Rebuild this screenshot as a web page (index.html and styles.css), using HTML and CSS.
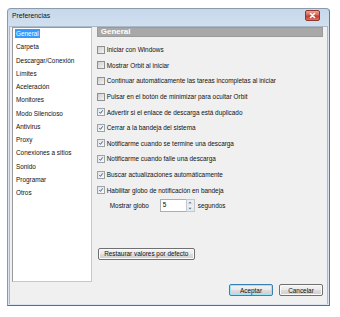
FILE: index.html
```html
<!DOCTYPE html>
<html lang="es">
<head>
  <meta charset="UTF-8">
  <title>Preferencias</title>
  <link rel="stylesheet" href="styles.css">
</head>
<body>
  <div class="window">
    <div class="titlebar">
      <span class="title">Preferencias</span>
      <span class="close-btn">
        <svg viewBox="0 0 13 9" width="13" height="9"><path d="M4.5 2.5 L8.5 6.5 M8.5 2.5 L4.5 6.5" stroke="#fff" stroke-width="1.6" stroke-linecap="round"/></svg>
      </span>
    </div>
    <div class="client">
      <div class="main">
        <ul class="listbox">
          <li><span class="sel">General</span></li>
          <li>Carpeta</li>
          <li>Descargar/Conexión</li>
          <li>Límites</li>
          <li>Aceleración</li>
          <li>Monitores</li>
          <li>Modo Silencioso</li>
          <li>Antivirus</li>
          <li>Proxy</li>
          <li>Conexiones a sitios</li>
          <li>Sonido</li>
          <li>Programar</li>
          <li>Otros</li>
        </ul>
        <div class="panel">
          <div class="panel-header">General</div>
          <div class="options">
            <label class="opt"><span class="cb"></span>Iniciar con Windows</label>
            <label class="opt"><span class="cb"></span>Mostrar Orbit al iniciar</label>
            <label class="opt"><span class="cb"></span>Continuar automáticamente las tareas incompletas al iniciar</label>
            <label class="opt"><span class="cb"></span>Pulsar en el botón de minimizar para ocultar Orbit</label>
            <label class="opt"><span class="cb on"><svg viewBox="0 0 8 8"><path d="M1.8 4.2 L3.3 5.8 L6.3 1.8" fill="none" stroke="#2b5aa0" stroke-width="1.3"/></svg></span>Advertir si el enlace de descarga está duplicado</label>
            <label class="opt"><span class="cb on"><svg viewBox="0 0 8 8"><path d="M1.8 4.2 L3.3 5.8 L6.3 1.8" fill="none" stroke="#2b5aa0" stroke-width="1.3"/></svg></span>Cerrar a la bandeja del sistema</label>
            <label class="opt"><span class="cb on"><svg viewBox="0 0 8 8"><path d="M1.8 4.2 L3.3 5.8 L6.3 1.8" fill="none" stroke="#2b5aa0" stroke-width="1.3"/></svg></span>Notificarme cuando se termine una descarga</label>
            <label class="opt"><span class="cb on"><svg viewBox="0 0 8 8"><path d="M1.8 4.2 L3.3 5.8 L6.3 1.8" fill="none" stroke="#2b5aa0" stroke-width="1.3"/></svg></span>Notificarme cuando falle una descarga</label>
            <label class="opt"><span class="cb on"><svg viewBox="0 0 8 8"><path d="M1.8 4.2 L3.3 5.8 L6.3 1.8" fill="none" stroke="#2b5aa0" stroke-width="1.3"/></svg></span>Buscar actualizaciones automáticamente</label>
            <label class="opt"><span class="cb on"><svg viewBox="0 0 8 8"><path d="M1.8 4.2 L3.3 5.8 L6.3 1.8" fill="none" stroke="#2b5aa0" stroke-width="1.3"/></svg></span>Habilitar globo de notificación en bandeja</label>
          </div>
          <div class="balloon-row">
            <span class="balloon-label">Mostrar globo</span>
            <span class="spin-input">5</span>
            <span class="spinner">
              <span class="spin-up"><svg viewBox="0 0 5 3"><path d="M0.5 2.5 L2.5 0.5 L4.5 2.5 Z" fill="#4a6a8a"/></svg></span>
              <span class="spin-down"><svg viewBox="0 0 5 3"><path d="M0.5 0.5 L2.5 2.5 L4.5 0.5 Z" fill="#4a6a8a"/></svg></span>
            </span>
            <span class="unit">segundos</span>
          </div>
          <button class="btn restore">Restaurar valores por defecto</button>
        </div>
      </div>
      <div class="footer">
        <button class="btn default">Aceptar</button>
        <button class="btn">Cancelar</button>
      </div>
    </div>
  </div>
</body>
</html>
```

FILE: styles.css
```css
body {
  margin: 0;
  background: #fff;
  font-family: 'Liberation Sans', Arial, sans-serif;
  font-size: 6.4px;
  color: #000;
}
.window {
  margin: 8px 0 0 7px;
  width: 323px;
  height: 298px;
  box-sizing: border-box;
  border: 1px solid;
  border-color: #8d9aa8 #3a87b5 #2f7eaa #8d99a6;
  border-radius: 4px 4px 0 0;
  background: linear-gradient(#c6d8ec, #d9e5f2 10%, #dbe6f2);
  padding: 0 1px 1px 1px;
  display: flex;
  flex-direction: column;
}
.titlebar {
  height: 17px;
  padding: 1px 8px 0 3px;
  box-sizing: border-box;
  display: flex;
  align-items: flex-start;
  justify-content: space-between;
}
.title {
  font-size: 6.8px;
  line-height: 11px;
  color: #111;
}
.close-btn {
  width: 13px;
  height: 9px;
  border: 1px solid #8b3a30;
  border-radius: 2px;
  background: linear-gradient(#e9a295, #d6685a 45%, #c4392a 55%, #d8735f);
  display: flex;
}
.close-btn svg {
  display: block;
}
.client {
  flex: 1;
  background: #f0f0f0;
  border: 1px solid #aab8c8;
  border-bottom: 0;
  padding: 0 4px 0 2px;
  display: flex;
  flex-direction: column;
}
.main {
  display: flex;
  gap: 5px;
}
.listbox {
  list-style: none;
  margin: 0;
  padding: 0 0 0 3px;
  width: 80px;
  height: 255px;
  box-sizing: border-box;
  background: #fff;
  border: 1px solid #a6a6a6;
  border-color: #9a9a9a #c8c8c8 #c8c8c8 #9a9a9a;
}
.listbox li {
  height: 13.28px;
  line-height: 13.28px;
  color: #111;
  white-space: nowrap;
}
.listbox li:first-child {
  margin-top: -1px;
}
.listbox .sel {
  background: #3399ff;
  color: #fff;
  display: inline-block;
  line-height: 9px;
  padding: 0 1px 0 0;
  margin-left: -1px;
  padding-left: 1px;
}
.panel {
  width: 227px;
  display: flex;
  flex-direction: column;
  align-items: flex-start;
}
.panel-header {
  align-self: stretch;
  height: 10px;
  box-sizing: border-box;
  background: #a8a8a8;
  border: 1px solid #9a9a9a;
  color: #fff;
  font-weight: bold;
  font-size: 8px;
  line-height: 8px;
  padding-left: 3px;
}
.options {
  margin-top: 5px;
  display: flex;
  flex-direction: column;
}
.opt {
  height: 15.6px;
  display: flex;
  align-items: center;
  white-space: nowrap;
  color: #111;
}
.cb {
  width: 8px;
  height: 8px;
  box-sizing: border-box;
  border: 1px solid #8e8f8f;
  background: linear-gradient(135deg, #cfcfcf, #f4f4f4);
  margin-right: 2px;
  display: flex;
}
.cb.on {
  background: linear-gradient(135deg, #e4e4e4, #fafafa);
  border-color: #9ea3a8;
}
.cb svg {
  width: 6px;
  height: 6px;
}
.balloon-row {
  margin-top: 1px;
  height: 13px;
  display: flex;
  align-items: stretch;
  padding-left: 13px;
}
.balloon-label {
  width: 50px;
  display: flex;
  align-items: center;
  color: #111;
}
.spin-input {
  width: 26px;
  box-sizing: border-box;
  background: #fff;
  border: 1px solid #abadb3;
  border-right: 0;
  padding: 1px 0 0 2px;
  line-height: 7px;
}
.spinner {
  width: 9px;
  display: flex;
  flex-direction: column;
  border: 1px solid #c4c8cc;
  box-sizing: border-box;
  background: #fff;
}
.spin-up,
.spin-down {
  flex: 1;
  background: linear-gradient(#f4f6f8, #dde3ea);
  border: 1px solid #e8ecf0;
  display: flex;
  align-items: center;
  justify-content: center;
}
.spinner svg {
  width: 4px;
  height: 3px;
}
.unit {
  margin-left: 3px;
  display: flex;
  align-items: center;
  color: #111;
}
.btn {
  font-family: 'Liberation Sans', Arial, sans-serif;
  font-size: 6.4px;
  color: #111;
  height: 12px;
  padding: 0;
  border: 1px solid #707070;
  border-radius: 2px;
  background: linear-gradient(#f3f3f3, #ebebeb 45%, #dddddd 50%, #cfcfcf);
  box-shadow: inset 0 0 0 1px #fbfbfb;
}
.restore {
  margin-top: 36px;
  margin-left: 1px;
  width: 97px;
}
.footer {
  margin-top: 2px;
  display: flex;
  justify-content: flex-end;
  gap: 6px;
}
.footer .btn {
  width: 44px;
}
.btn.default {
  border-color: #3c7fb1;
  box-shadow: inset 0 0 0 1px #9fe2fb;
}
```
